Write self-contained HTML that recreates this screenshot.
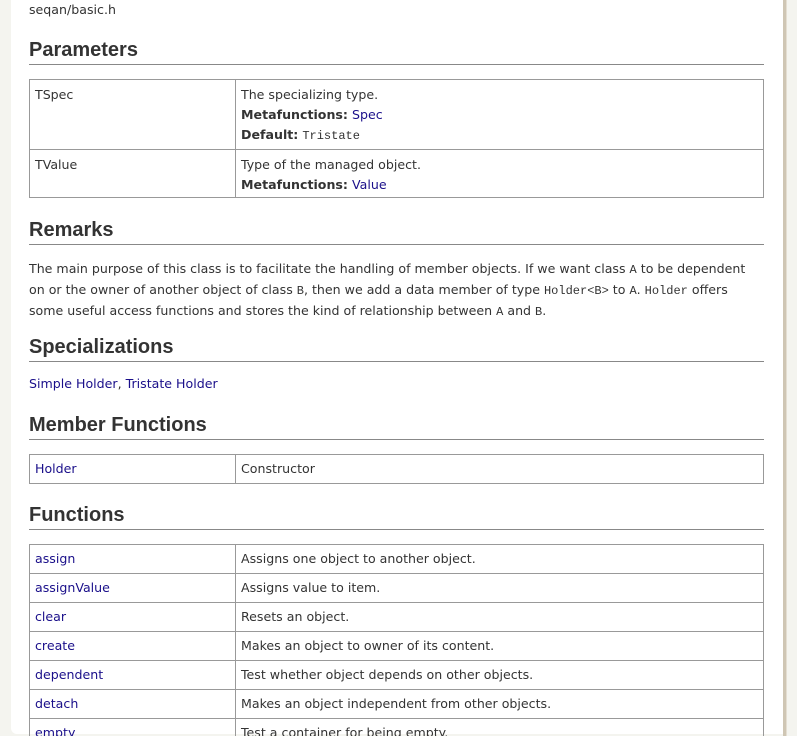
<!DOCTYPE html>
<html><head><meta charset="utf-8"><style>
html,body{margin:0;padding:0;overflow:hidden;width:797px;height:736px;}
body{background:#f4f4ef;position:relative;font-family:"DejaVu Sans","Liberation Sans",sans-serif;font-size:12.6px;color:#333;}
#panel{position:absolute;left:11px;top:-10px;width:772px;height:744px;background:#fff;border-radius:0 0 0 6px;}
#rb{position:absolute;left:783px;top:0;width:3px;height:736px;background:#cfc6b4;}
#rb2{position:absolute;left:786px;top:0;width:1px;height:736px;background:#e4ded2;}
.a{position:absolute;left:29px;white-space:nowrap;}
h2{position:absolute;left:29px;margin:0;font-family:"Liberation Sans",sans-serif;font-weight:bold;font-size:20px;color:#333;line-height:24px;}
.rule{position:absolute;left:29px;width:735px;height:1px;background:#888;}
a{color:#1a0f8a;text-decoration:none;}
table{position:absolute;left:29px;width:735px;border-collapse:collapse;}
td{border:1px solid #999;padding:0 5px;vertical-align:top;height:28px;line-height:28px;white-space:nowrap;}
td.c1{width:195px;}
code{font-family:"Liberation Mono",monospace;font-size:12px;}
b{font-weight:bold;}
</style></head><body>
<div id="panel"></div><div id="rb"></div><div id="rb2"></div>
<div class="a" style="top:2px">seqan/basic.h</div>
<h2 style="top:38px">Parameters</h2><div class="rule" style="top:64px"></div>
<table style="top:79px">
<tr><td class="c1" style="height:64px;line-height:20px;padding-top:5px;">TSpec</td><td style="height:64px;line-height:20px;padding-top:5px;">The specializing type.<br><b>Metafunctions:</b> <a>Spec</a><br><b>Default:</b> <code>Tristate</code></td></tr>
<tr><td class="c1" style="height:42px;line-height:20px;padding-top:5px;">TValue</td><td style="height:42px;line-height:20px;padding-top:5px;">Type of the managed object.<br><b>Metafunctions:</b> <a>Value</a></td></tr>
</table>
<h2 style="top:218px">Remarks</h2><div class="rule" style="top:244px"></div>
<div class="a" style="top:259px;line-height:19px;">The main purpose of this class is to facilitate the handling of member objects. If we want class <code>A</code> to be dependent<br>on or the owner of another object of class <code>B</code>, then we add a data member of type <code>Holder&lt;B&gt;</code> to <code>A</code>. <code>Holder</code> offers<br>some useful access functions and stores the kind of relationship between <code>A</code> and <code>B</code>.</div>
<h2 style="top:335px">Specializations</h2><div class="rule" style="top:361px"></div>
<div class="a" style="top:376px"><a>Simple Holder</a>, <a>Tristate Holder</a></div>
<h2 style="top:413px">Member Functions</h2><div class="rule" style="top:439px"></div>
<table style="top:454px"><tr><td class="c1"><a>Holder</a></td><td>Constructor</td></tr></table>
<h2 style="top:503px">Functions</h2><div class="rule" style="top:529px"></div>
<table style="top:544px">
<tr><td class="c1"><a>assign</a></td><td>Assigns one object to another object.</td></tr>
<tr><td class="c1"><a>assignValue</a></td><td>Assigns value to item.</td></tr>
<tr><td class="c1"><a>clear</a></td><td>Resets an object.</td></tr>
<tr><td class="c1"><a>create</a></td><td>Makes an object to owner of its content.</td></tr>
<tr><td class="c1"><a>dependent</a></td><td>Test whether object depends on other objects.</td></tr>
<tr><td class="c1"><a>detach</a></td><td>Makes an object independent from other objects.</td></tr>
<tr><td class="c1"><a>empty</a></td><td>Test a container for being empty.</td></tr>
</table>
</body></html>
